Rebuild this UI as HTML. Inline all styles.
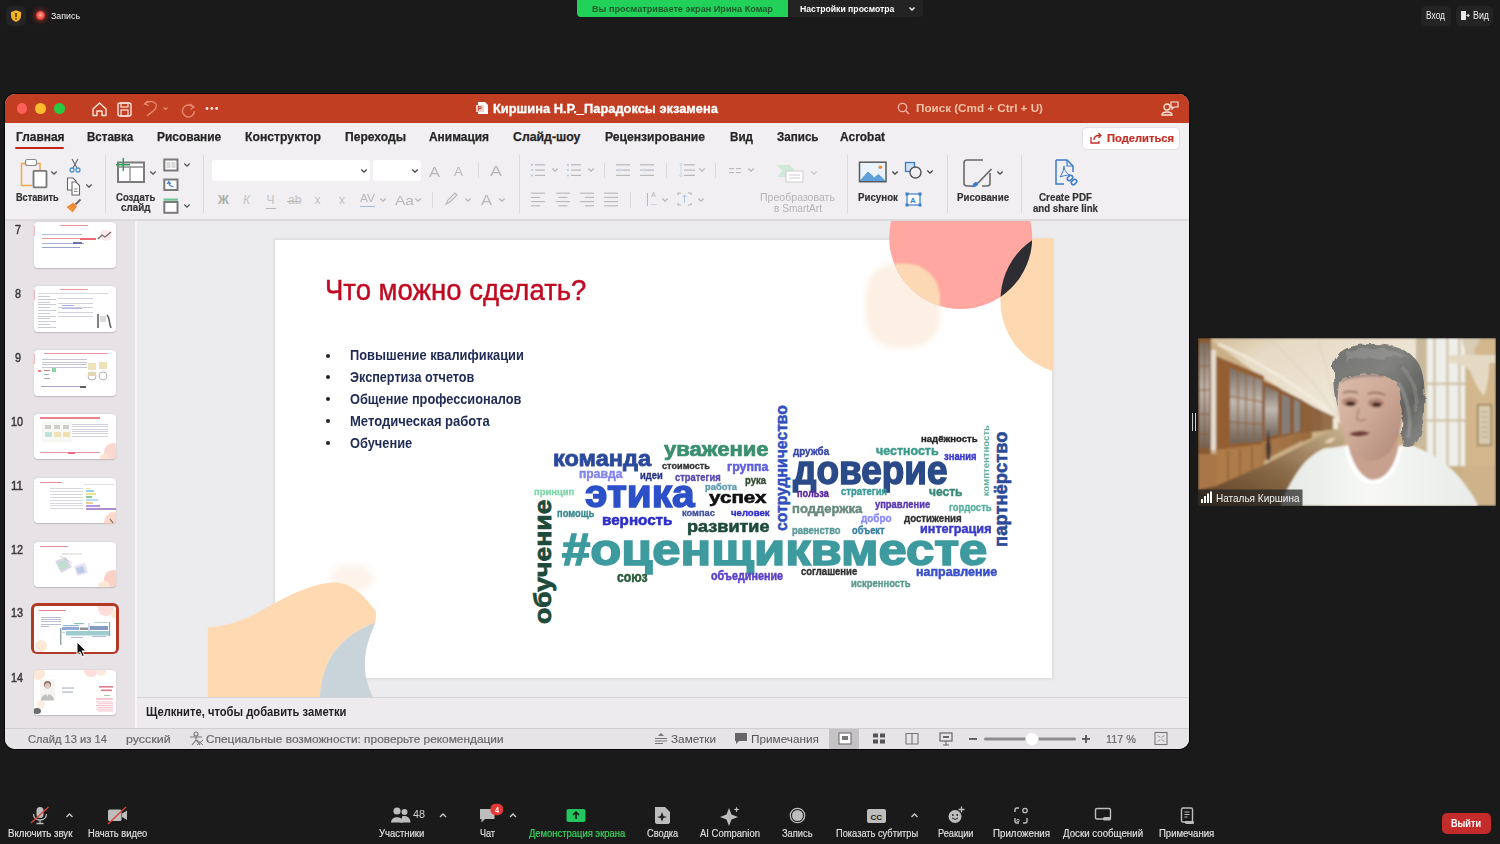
<!DOCTYPE html><html><head><meta charset="utf-8"><style>
html,body{margin:0;padding:0;width:1500px;height:844px;overflow:hidden;background:#1a1a1a;}
body{position:relative;font-family:"Liberation Sans",sans-serif;}
.t{position:absolute;white-space:nowrap;line-height:1;transform-origin:0 0;}
.r{position:absolute;}
</style></head><body>
<div class="r" style="left:6px;top:6px;width:20px;height:20px;background:#252525;border-radius:5px;"></div>
<svg class="r" style="left:9px;top:9px" width="14" height="14" viewBox="0 0 14 14"><path d="M7 1.2 L12 3 V7 C12 10 9.8 12 7 13 C4.2 12 2 10 2 7 V3 Z" fill="#f5b324"/><rect x="6.3" y="4" width="1.4" height="4.2" fill="#3a2a00"/><rect x="6.3" y="9.2" width="1.4" height="1.4" fill="#3a2a00"/></svg>
<div class="r" style="left:36px;top:11px;width:9px;height:9px;border-radius:50%;background:radial-gradient(circle at 50% 45%,#ffb0a8 0,#f0483c 55%,#d02a20 100%);box-shadow:0 0 4px 2px rgba(240,60,50,.45)"></div>
<div class="t" style="left:51.0px;top:11.0px;font-size:9.50px;font-weight:400;color:#f0f0f0;transform:scaleX(0.931);">Запись</div>
<div class="r" style="left:577px;top:0px;width:211px;height:17px;background:#22d15a;border-radius:0 0 0 4px;"></div>
<div class="r" style="left:788px;top:0px;width:135px;height:17px;background:#232323;border-radius:0 0 4px 0;"></div>
<div class="t" style="left:592.0px;top:4.1px;font-size:9.60px;font-weight:700;color:#1e5a2c;transform:scaleX(0.951);">Вы просматриваете экран Ирина Комар</div>
<div class="t" style="left:800.0px;top:4.1px;font-size:9.60px;font-weight:700;color:#ffffff;transform:scaleX(0.903);">Настройки просмотра</div>
<svg class="r" style="left:908px;top:6px" width="8" height="6" viewBox="0 0 8 6"><path d="M1.5 1.5 L4 4 L6.5 1.5" stroke="#fff" stroke-width="1.4" fill="none"/></svg>
<div class="r" style="left:1421px;top:6px;width:30px;height:20px;background:#242424;border-radius:5px;"></div>
<div class="t" style="left:1426.0px;top:10.5px;font-size:10.00px;font-weight:400;color:#eeeeee;transform:scaleX(0.841);">Вход</div>
<div class="r" style="left:1456px;top:6px;width:37px;height:20px;background:#242424;border-radius:5px;"></div>
<svg class="r" style="left:1460px;top:10px" width="10" height="11" viewBox="0 0 10 11"><rect x="1" y="1" width="5" height="9" fill="#e8e8e8"/><path d="M6.5 5.5 L9 5.5 M7.8 4.2 L9 5.5 L7.8 6.8" stroke="#e8e8e8" stroke-width="1.2" fill="none"/></svg>
<div class="t" style="left:1473.0px;top:10.5px;font-size:10.00px;font-weight:400;color:#eeeeee;transform:scaleX(0.884);">Вид</div>
<div class="r" style="left:5px;top:94px;width:1184px;height:655px;border-radius:10px;overflow:hidden;background:#eceaec;box-shadow:0 0 0 1px #050505;">
<div class="r" style="left:-5px;top:-94px;width:1500px;height:844px;">
<div class="r" style="left:5px;top:94px;width:1184px;height:29px;background:#c13e22;"></div>
<div class="r" style="left:16.9px;top:103.2px;width:10.6px;height:10.6px;border-radius:50%;background:#fd5f58"></div>
<div class="r" style="left:35.3px;top:103.2px;width:10.6px;height:10.6px;border-radius:50%;background:#fdbc2e"></div>
<div class="r" style="left:54.0px;top:103.2px;width:10.6px;height:10.6px;border-radius:50%;background:#28c840"></div>
<svg class="r" style="left:90px;top:100px" width="130" height="18" viewBox="0 0 130 18">
<path d="M3 9 L9.5 3 L16 9 V15.5 H12 V11 H7 V15.5 H3 Z" fill="none" stroke="#fbe6dc" stroke-width="1.4" stroke-linejoin="round"/>
<rect x="28" y="3" width="13" height="13" rx="2" fill="none" stroke="#fbe6dc" stroke-width="1.4"/><rect x="31" y="3" width="7" height="4" fill="none" stroke="#fbe6dc" stroke-width="1.2"/><rect x="31" y="10" width="7" height="6" fill="none" stroke="#fbe6dc" stroke-width="1.2"/>
<path d="M54.5 4 C60 -0.5 68 1.5 66 7.5 C65 10.5 60 13 57 16" fill="none" stroke="#e58a70" stroke-width="1.3"/><path d="M58 0.8 L54.5 4 L59 5.5" fill="none" stroke="#e58a70" stroke-width="1.3"/>
<path d="M73.5 7.5 L75.5 9.5 L77.5 7.5" fill="none" stroke="#e58a70" stroke-width="1.2"/>
<path d="M103 7 A6 6 0 1 0 104.5 11" fill="none" stroke="#e58a70" stroke-width="1.4"/><path d="M100 4 L104 7 L100.5 9.5" fill="none" stroke="#e58a70" stroke-width="1.3"/>
<circle cx="117" cy="8.5" r="1.4" fill="#fbe6dc"/><circle cx="121.8" cy="8.5" r="1.4" fill="#fbe6dc"/><circle cx="126.6" cy="8.5" r="1.4" fill="#fbe6dc"/>
</svg>
<svg class="r" style="left:476px;top:101px" width="13" height="14" viewBox="0 0 13 14"><path d="M2 1 H9 L12 4 V13 H2 Z" fill="#fff"/><rect x="0" y="4" width="8" height="7" fill="#f6d0c4"/><text x="1.5" y="10" font-size="6.5" font-weight="700" fill="#c3401f" font-family="Liberation Sans">P</text></svg>
<div class="t" style="left:493.0px;top:103.2px;font-size:12.50px;font-weight:700;color:#ffffff;transform:scaleX(1.029);-webkit-text-stroke:0.3px #fff;">Киршина Н.Р._Парадоксы экзамена</div>
<svg class="r" style="left:897px;top:102px" width="13" height="13" viewBox="0 0 13 13"><circle cx="5.5" cy="5.5" r="4.2" fill="none" stroke="#f2b6a4" stroke-width="1.3"/><path d="M8.6 8.6 L12 12" stroke="#f2b6a4" stroke-width="1.4"/></svg>
<div class="t" style="left:916.0px;top:103.2px;font-size:11.30px;font-weight:700;color:#f2c2a6;transform:scaleX(1.032);">Поиск (Cmd + Ctrl + U)</div>
<svg class="r" style="left:1161px;top:100px" width="18" height="16" viewBox="0 0 18 16"><circle cx="6" cy="7" r="3" fill="none" stroke="#fbe6dc" stroke-width="1.3"/><path d="M1 15 C1 11 11 11 11 15 Z" fill="none" stroke="#fbe6dc" stroke-width="1.3"/><path d="M10 2 H17 V7 H13 L11 9 V7 H10 Z" fill="none" stroke="#fbe6dc" stroke-width="1.2"/></svg>
<div class="r" style="left:5px;top:123px;width:1184px;height:97px;background:#f1eff1;"></div>
<div class="r" style="left:5px;top:219px;width:1184px;height:1.5px;background:#dcdadc;"></div>
<div class="t" style="left:15.5px;top:130.6px;font-size:12.30px;font-weight:700;color:#262626;transform:scaleX(0.970);-webkit-text-stroke:0.25px #262626;">Главная</div>
<div class="t" style="left:86.7px;top:130.6px;font-size:12.30px;font-weight:700;color:#262626;transform:scaleX(0.940);-webkit-text-stroke:0.25px #262626;">Вставка</div>
<div class="t" style="left:156.8px;top:130.6px;font-size:12.30px;font-weight:700;color:#262626;transform:scaleX(0.970);-webkit-text-stroke:0.25px #262626;">Рисование</div>
<div class="t" style="left:245.0px;top:130.6px;font-size:12.30px;font-weight:700;color:#262626;transform:scaleX(0.993);-webkit-text-stroke:0.25px #262626;">Конструктор</div>
<div class="t" style="left:345.0px;top:130.6px;font-size:12.30px;font-weight:700;color:#262626;transform:scaleX(0.983);-webkit-text-stroke:0.25px #262626;">Переходы</div>
<div class="t" style="left:429.0px;top:130.6px;font-size:12.30px;font-weight:700;color:#262626;transform:scaleX(0.969);-webkit-text-stroke:0.25px #262626;">Анимация</div>
<div class="t" style="left:513.0px;top:130.6px;font-size:12.30px;font-weight:700;color:#262626;-webkit-text-stroke:0.25px #262626;">Слайд-шоу</div>
<div class="t" style="left:605.0px;top:130.6px;font-size:12.30px;font-weight:700;color:#262626;transform:scaleX(0.987);-webkit-text-stroke:0.25px #262626;">Рецензирование</div>
<div class="t" style="left:730.0px;top:130.6px;font-size:12.30px;font-weight:700;color:#262626;transform:scaleX(0.949);-webkit-text-stroke:0.25px #262626;">Вид</div>
<div class="t" style="left:776.5px;top:130.6px;font-size:12.30px;font-weight:700;color:#262626;transform:scaleX(0.945);-webkit-text-stroke:0.25px #262626;">Запись</div>
<div class="t" style="left:840.0px;top:130.6px;font-size:12.30px;font-weight:700;color:#262626;transform:scaleX(0.968);-webkit-text-stroke:0.25px #262626;">Acrobat</div>
<div class="r" style="left:15px;top:146.8px;width:49px;height:2.6px;background:#c4281c;border-radius:1.3px;"></div>
<div class="r" style="left:1083px;top:128px;width:96px;height:21px;background:#ffffff;border-radius:4px;box-shadow:0 0 0 0.8px #dedcde;"></div>
<svg class="r" style="left:1089px;top:131px" width="14" height="14" viewBox="0 0 14 14"><path d="M2 6 V12 H10 V10" fill="none" stroke="#c42f26" stroke-width="1.3"/><path d="M5 9 C5 6 7 4.5 10 4.5 H12 M9.5 2 L12 4.5 L9.5 7" fill="none" stroke="#c42f26" stroke-width="1.3"/></svg>
<div class="t" style="left:1107.0px;top:133.2px;font-size:11.40px;font-weight:700;color:#c42f26;transform:scaleX(0.980);-webkit-text-stroke:0.2px #c42f26;">Поделиться</div>
<svg class="r" style="left:19px;top:157px" width="30" height="32" viewBox="0 0 30 32">
<path d="M6 6.5 H2.5 V28.5 H13 M17 6.5 H21 V13" fill="none" stroke="#f0a848" stroke-width="1.5"/>
<rect x="6.5" y="2.5" width="11" height="6" rx="2" fill="#fff" stroke="#8a8a8a" stroke-width="1.1"/>
<rect x="14.5" y="13.8" width="13" height="16.5" rx="0.8" fill="#fff" stroke="#777" stroke-width="1.8"/>
</svg>
<svg class="r" style="left:50px;top:170px" width="8" height="6" viewBox="0 0 8 6"><path d="M1.3 1.5 L4 4.2 L6.7 1.5" stroke="#555" stroke-width="1.3" fill="none"/></svg>
<div class="t" style="left:16.0px;top:191.7px;font-size:11.00px;font-weight:700;color:#333;transform:scaleX(0.833);-webkit-text-stroke:0.2px #333;">Вставить</div>
<svg class="r" style="left:66px;top:157px" width="18" height="58" viewBox="0 0 18 58">
<path d="M6 2 L11 11 M12 2 L7 11" stroke="#666" stroke-width="1.1"/><circle cx="6" cy="13" r="2" fill="none" stroke="#4a90d8" stroke-width="1.3"/><circle cx="12" cy="13" r="2" fill="none" stroke="#4a90d8" stroke-width="1.3"/>
<path d="M1.5 21 H7 L10 24 V33 H1.5 Z" fill="#fff" stroke="#666" stroke-width="1.1"/><path d="M6 25 H10 L13.5 28.5 V38 H6 Z" fill="#fff" stroke="#666" stroke-width="1.1"/><path d="M8 32 H11.5 M8 34.5 H11.5" stroke="#666" stroke-width=".8"/>
<path d="M14.5 42.5 L9.5 47.5" stroke="#666" stroke-width="1.8"/><path d="M0.5 50 L7.5 45.5 L11 49.5 L6.5 55.5 Z" fill="#f08a30"/><path d="M2.5 52 L5 49.5 M4.5 54 L7.5 50.5" stroke="#f8c080" stroke-width=".7"/>
</svg>
<svg class="r" style="left:85.3px;top:182.5px" width="8" height="6" viewBox="0 0 8 6"><path d="M1.3 1.5 L4 4.2 L6.7 1.5" stroke="#555" stroke-width="1.3" fill="none"/></svg>
<div class="r" style="left:105px;top:155px;width:1px;height:58px;background:#dcdadc;"></div>
<svg class="r" style="left:114px;top:156px" width="34" height="30" viewBox="0 0 34 30">
<rect x="4" y="6.5" width="26" height="19.5" fill="#fff" stroke="#7a7a7a" stroke-width="2"/><path d="M16 11 V26 M4 11 H30" stroke="#8a8a8a" stroke-width="1.3"/>
<path d="M9.3 2 V15 M2 8.7 H16" stroke="#2ea05a" stroke-width="1.5"/>
</svg>
<svg class="r" style="left:149.3px;top:170px" width="8" height="6" viewBox="0 0 8 6"><path d="M1.3 1.5 L4 4.2 L6.7 1.5" stroke="#555" stroke-width="1.3" fill="none"/></svg>
<div class="t" style="left:116.0px;top:191.7px;font-size:11.00px;font-weight:700;color:#333;transform:scaleX(0.869);-webkit-text-stroke:0.2px #333;">Создать</div>
<div class="t" style="left:121.3px;top:201.7px;font-size:11.00px;font-weight:700;color:#333;transform:scaleX(0.892);-webkit-text-stroke:0.2px #333;">слайд</div>
<svg class="r" style="left:162px;top:157px" width="18" height="58" viewBox="0 0 18 58">
<rect x="2.3" y="2.5" width="13.2" height="11" fill="#fff" stroke="#7a7a7a" stroke-width="2"/><rect x="4.5" y="5" width="4" height="6" fill="#d8d8d8"/><rect x="9.5" y="5" width="4" height="6" fill="#d8d8d8"/>
<rect x="2.3" y="22.5" width="13.2" height="10.5" fill="#fff" stroke="#7a7a7a" stroke-width="2"/><path d="M5 27 L6.8 24.5 L8.6 27 M6.8 25 C6.8 29 9 29.5 11.5 29.5" stroke="#3a7fd0" stroke-width="1.2" fill="none"/>
<rect x="1.5" y="41.5" width="14.5" height="2.2" fill="#6cc494"/><rect x="2.3" y="45" width="13.2" height="10.8" fill="#fff" stroke="#7a7a7a" stroke-width="2"/>
</svg>
<svg class="r" style="left:182.7px;top:162px" width="8" height="6" viewBox="0 0 8 6"><path d="M1.3 1.5 L4 4.2 L6.7 1.5" stroke="#555" stroke-width="1.3" fill="none"/></svg>
<svg class="r" style="left:182.7px;top:203px" width="8" height="6" viewBox="0 0 8 6"><path d="M1.3 1.5 L4 4.2 L6.7 1.5" stroke="#555" stroke-width="1.3" fill="none"/></svg>
<div class="r" style="left:203px;top:155px;width:1px;height:58px;background:#dcdadc;"></div>
<div class="r" style="left:212.4px;top:160.2px;width:157.2px;height:20.8px;background:#ffffff;border-radius:3px;"></div>
<svg class="r" style="left:359.8px;top:168px" width="8" height="6" viewBox="0 0 8 6"><path d="M1.3 1.5 L4 4.2 L6.7 1.5" stroke="#444" stroke-width="1.3" fill="none"/></svg>
<div class="r" style="left:373.2px;top:160.2px;width:48px;height:20.8px;background:#ffffff;border-radius:3px;"></div>
<svg class="r" style="left:411px;top:168px" width="8" height="6" viewBox="0 0 8 6"><path d="M1.3 1.5 L4 4.2 L6.7 1.5" stroke="#444" stroke-width="1.3" fill="none"/></svg>
<div class="t" style="left:429.0px;top:164.3px;font-size:15.00px;font-weight:400;color:#b9b7b9;transform:scaleX(1.095);">A</div>
<div class="t" style="left:454.0px;top:166.4px;font-size:12.50px;font-weight:400;color:#b9b7b9;transform:scaleX(1.075);">A</div>
<div class="r" style="left:478.4px;top:163px;width:1px;height:15px;background:#dcdadc;"></div>
<div class="t" style="left:490.0px;top:164.1px;font-size:14.00px;font-weight:400;color:#b9b7b9;transform:scaleX(1.279);">A</div>
<div class="t" style="left:218.1px;top:194.3px;font-size:12.00px;font-weight:700;color:#aaa;">Ж</div>
<div class="t" style="left:243.0px;top:194.3px;font-size:12.00px;font-weight:400;color:#c4c2c4;font-style:italic;">К</div>
<div class="t" style="left:266.5px;top:194.3px;font-size:12.00px;font-weight:400;color:#c4c2c4;">Ч</div>
<div class="t" style="left:288.0px;top:194.3px;font-size:12.00px;font-weight:400;color:#c4c2c4;">ab</div>
<div class="t" style="left:314.5px;top:194.3px;font-size:12.00px;font-weight:400;color:#c4c2c4;">x</div>
<div class="t" style="left:339.0px;top:194.3px;font-size:12.00px;font-weight:400;color:#c4c2c4;">x</div>
<div class="r" style="left:266px;top:207.5px;width:10px;height:1px;background:#b9b7b9;"></div>
<div class="r" style="left:287px;top:201px;width:14px;height:1px;background:#b9b7b9;"></div>
<div class="t" style="left:360.0px;top:193.5px;font-size:10.00px;font-weight:400;color:#b9b7b9;transform:scaleX(1.190);">AV</div>
<div class="r" style="left:360px;top:206px;width:15px;height:1px;background:#9cc0e0;"></div>
<svg class="r" style="left:379px;top:197px" width="8" height="6" viewBox="0 0 8 6"><path d="M1.3 1.5 L4 4.2 L6.7 1.5" stroke="#b9b7b9" stroke-width="1.3" fill="none"/></svg>
<div class="t" style="left:395.0px;top:194.0px;font-size:13.00px;font-weight:400;color:#b9b7b9;transform:scaleX(1.193);">Aa</div>
<svg class="r" style="left:414px;top:197px" width="8" height="6" viewBox="0 0 8 6"><path d="M1.3 1.5 L4 4.2 L6.7 1.5" stroke="#b9b7b9" stroke-width="1.3" fill="none"/></svg>
<div class="r" style="left:432px;top:192px;width:1px;height:16px;background:#dcdadc;"></div>
<svg class="r" style="left:443px;top:191px" width="16" height="16" viewBox="0 0 16 16"><path d="M3 13 L5 9 L12 2 L14 4 L7 11 Z" fill="none" stroke="#b9b7b9" stroke-width="1.2"/></svg>
<svg class="r" style="left:464px;top:197px" width="8" height="6" viewBox="0 0 8 6"><path d="M1.3 1.5 L4 4.2 L6.7 1.5" stroke="#b9b7b9" stroke-width="1.3" fill="none"/></svg>
<div class="t" style="left:481.0px;top:193.1px;font-size:14.00px;font-weight:400;color:#b9b7b9;transform:scaleX(1.173);">A</div>
<svg class="r" style="left:498px;top:197px" width="8" height="6" viewBox="0 0 8 6"><path d="M1.3 1.5 L4 4.2 L6.7 1.5" stroke="#b9b7b9" stroke-width="1.3" fill="none"/></svg>
<div class="r" style="left:518.7px;top:155px;width:1px;height:58px;background:#dcdadc;"></div>
<svg class="r" style="left:0;top:0" width="1200" height="230"><circle cx="532" cy="164.8" r="1" fill="#a8c8e8"/><rect x="535" y="164.20000000000002" width="10" height="1.2" fill="#b9b7b9"/><circle cx="532" cy="170.10000000000002" r="1" fill="#a8c8e8"/><rect x="535" y="169.50000000000003" width="10" height="1.2" fill="#b9b7b9"/><circle cx="532" cy="175.4" r="1" fill="#a8c8e8"/><rect x="535" y="174.8" width="10" height="1.2" fill="#b9b7b9"/><circle cx="568" cy="164.8" r="1" fill="#a8c8e8"/><rect x="571" y="164.20000000000002" width="10" height="1.2" fill="#b9b7b9"/><circle cx="568" cy="170.10000000000002" r="1" fill="#a8c8e8"/><rect x="571" y="169.50000000000003" width="10" height="1.2" fill="#b9b7b9"/><circle cx="568" cy="175.4" r="1" fill="#a8c8e8"/><rect x="571" y="174.8" width="10" height="1.2" fill="#b9b7b9"/><rect x="616" y="164.20000000000002" width="14" height="1.2" fill="#b9b7b9"/><rect x="616" y="169.50000000000003" width="14" height="1.2" fill="#b9b7b9"/><rect x="616" y="174.8" width="14" height="1.2" fill="#b9b7b9"/><rect x="640" y="164.20000000000002" width="14" height="1.2" fill="#b9b7b9"/><rect x="640" y="169.50000000000003" width="14" height="1.2" fill="#b9b7b9"/><rect x="640" y="174.8" width="14" height="1.2" fill="#b9b7b9"/><rect x="684" y="164.20000000000002" width="11" height="1.2" fill="#b9b7b9"/><rect x="684" y="169.50000000000003" width="11" height="1.2" fill="#b9b7b9"/><rect x="684" y="174.8" width="11" height="1.2" fill="#b9b7b9"/><path d="M618.5 170.4 H623 M620 168.5 L618 170.4 L620 172.3" stroke="#c8d8e8" stroke-width="1" fill="none"/><path d="M641 170.4 H646 M644 168.5 L646 170.4 L644 172.3" stroke="#c8d8e8" stroke-width="1" fill="none"/><path d="M681 163 V177 M679.3 165 L681 163 L682.7 165 M679.3 175 L681 177 L682.7 175" stroke="#c8d8e8" stroke-width="1" fill="none"/><rect x="729" y="168" width="5" height="1.1" fill="#b9b7b9"/><rect x="736" y="168" width="5" height="1.1" fill="#b9b7b9"/><rect x="729" y="172" width="5" height="1.1" fill="#b9b7b9"/><rect x="736" y="172" width="5" height="1.1" fill="#b9b7b9"/><rect x="531" y="192.64999999999998" width="14" height="1.1" fill="#b9b7b9"/><rect x="531" y="196.84999999999997" width="9" height="1.1" fill="#b9b7b9"/><rect x="531" y="201.04999999999998" width="14" height="1.1" fill="#b9b7b9"/><rect x="531" y="205.24999999999997" width="9" height="1.1" fill="#b9b7b9"/><rect x="556.0" y="192.64999999999998" width="14" height="1.1" fill="#b9b7b9"/><rect x="558.5" y="196.84999999999997" width="9" height="1.1" fill="#b9b7b9"/><rect x="556.0" y="201.04999999999998" width="14" height="1.1" fill="#b9b7b9"/><rect x="558.5" y="205.24999999999997" width="9" height="1.1" fill="#b9b7b9"/><rect x="580" y="192.64999999999998" width="14" height="1.1" fill="#b9b7b9"/><rect x="585" y="196.84999999999997" width="9" height="1.1" fill="#b9b7b9"/><rect x="580" y="201.04999999999998" width="14" height="1.1" fill="#b9b7b9"/><rect x="585" y="205.24999999999997" width="9" height="1.1" fill="#b9b7b9"/><rect x="604" y="192.64999999999998" width="14" height="1.1" fill="#b9b7b9"/><rect x="604" y="196.84999999999997" width="14" height="1.1" fill="#b9b7b9"/><rect x="604" y="201.04999999999998" width="14" height="1.1" fill="#b9b7b9"/><rect x="604" y="205.24999999999997" width="14" height="1.1" fill="#b9b7b9"/></svg>
<svg class="r" style="left:551px;top:167px" width="8" height="6" viewBox="0 0 8 6"><path d="M1.3 1.5 L4 4.2 L6.7 1.5" stroke="#b9b7b9" stroke-width="1.3" fill="none"/></svg>
<svg class="r" style="left:587px;top:167px" width="8" height="6" viewBox="0 0 8 6"><path d="M1.3 1.5 L4 4.2 L6.7 1.5" stroke="#b9b7b9" stroke-width="1.3" fill="none"/></svg>
<svg class="r" style="left:698px;top:167px" width="8" height="6" viewBox="0 0 8 6"><path d="M1.3 1.5 L4 4.2 L6.7 1.5" stroke="#b9b7b9" stroke-width="1.3" fill="none"/></svg>
<svg class="r" style="left:747px;top:167px" width="8" height="6" viewBox="0 0 8 6"><path d="M1.3 1.5 L4 4.2 L6.7 1.5" stroke="#b9b7b9" stroke-width="1.3" fill="none"/></svg>
<svg class="r" style="left:661px;top:196.5px" width="8" height="6" viewBox="0 0 8 6"><path d="M1.3 1.5 L4 4.2 L6.7 1.5" stroke="#b9b7b9" stroke-width="1.3" fill="none"/></svg>
<svg class="r" style="left:697px;top:196.5px" width="8" height="6" viewBox="0 0 8 6"><path d="M1.3 1.5 L4 4.2 L6.7 1.5" stroke="#b9b7b9" stroke-width="1.3" fill="none"/></svg>
<div class="r" style="left:604px;top:163px;width:1px;height:15px;background:#dcdadc;"></div>
<div class="r" style="left:666px;top:163px;width:1px;height:15px;background:#dcdadc;"></div>
<div class="r" style="left:714.7px;top:163px;width:1px;height:15px;background:#dcdadc;"></div>
<div class="r" style="left:630px;top:192px;width:1px;height:16px;background:#dcdadc;"></div>
<div class="t" style="left:651.0px;top:191.1px;font-size:7.00px;font-weight:400;color:#b9b7b9;">A</div>
<div class="r" style="left:646.5px;top:193px;width:1px;height:13px;background:#b9b7b9;"></div>
<div class="r" style="left:651px;top:204px;width:6px;height:1px;background:#c8d8e8;"></div>
<svg class="r" style="left:677px;top:192px" width="15" height="14" viewBox="0 0 15 14"><path d="M1 3 V1 H4 M11 1 H14 V3 M1 11 V13 H4 M11 13 H14 V11" fill="none" stroke="#b9b7b9" stroke-width="1.2"/><path d="M7.5 3 V11 M5.5 5 L7.5 3 L9.5 5" fill="none" stroke="#a8c8e8" stroke-width="1"/></svg>
<svg class="r" style="left:776px;top:162px" width="30" height="22" viewBox="0 0 30 22"><path d="M1 3 H14 L19 9 L14 15 H1 L6 9 Z" fill="#cfe8d8"/><rect x="10" y="9" width="17" height="11" fill="#fff" stroke="#ccc" stroke-width="1"/><path d="M13 13 H24 M13 16 H24" stroke="#ccc" stroke-width="1"/></svg>
<svg class="r" style="left:809.6px;top:169.6px" width="8" height="6" viewBox="0 0 8 6"><path d="M1.3 1.5 L4 4.2 L6.7 1.5" stroke="#c8c8c8" stroke-width="1.3" fill="none"/></svg>
<div class="t" style="left:760.0px;top:192.5px;font-size:10.00px;font-weight:400;color:#b5b3b5;transform:scaleX(1.056);">Преобразовать</div>
<div class="t" style="left:774.0px;top:203.5px;font-size:10.00px;font-weight:400;color:#b5b3b5;transform:scaleX(1.009);">в SmartArt</div>
<div class="r" style="left:847px;top:155px;width:1px;height:58px;background:#dcdadc;"></div>
<svg class="r" style="left:858px;top:161px" width="30" height="22" viewBox="0 0 30 22"><rect x="1.5" y="1.2" width="26.5" height="19.5" fill="#eaf3fb" stroke="#5a5a5a" stroke-width="1.5"/><path d="M2.2 20 L10 11 L16 16.5 L20.5 13 L27.3 19.5 V20 Z" fill="#5f9fdc"/><path d="M2.2 20 L10 11 L15 15.5" fill="none" stroke="#4a86c6" stroke-width=".8"/><circle cx="22.3" cy="6.3" r="1.8" fill="#f08a30"/></svg>
<svg class="r" style="left:891px;top:169.6px" width="8" height="6" viewBox="0 0 8 6"><path d="M1.3 1.5 L4 4.2 L6.7 1.5" stroke="#444" stroke-width="1.3" fill="none"/></svg>
<svg class="r" style="left:904px;top:161px" width="20" height="20" viewBox="0 0 20 20"><rect x="1.5" y="1.5" width="9" height="9" fill="#cde0f5" stroke="#3d7cc9" stroke-width="1.3"/><circle cx="11.5" cy="11.5" r="5.5" fill="#f1eff1" stroke="#555" stroke-width="1.4"/></svg>
<svg class="r" style="left:926px;top:169px" width="8" height="6" viewBox="0 0 8 6"><path d="M1.3 1.5 L4 4.2 L6.7 1.5" stroke="#444" stroke-width="1.3" fill="none"/></svg>
<svg class="r" style="left:905px;top:192px" width="17" height="15" viewBox="0 0 17 15"><rect x="2" y="2" width="13" height="11" fill="#fff" stroke="#3d7cc9" stroke-width="1.2"/><rect x="0.5" y="0.5" width="3" height="3" fill="#3d7cc9"/><rect x="13.5" y="0.5" width="3" height="3" fill="#3d7cc9"/><rect x="0.5" y="11.5" width="3" height="3" fill="#3d7cc9"/><rect x="13.5" y="11.5" width="3" height="3" fill="#3d7cc9"/><text x="5" y="11" font-size="8" font-weight="700" fill="#3d7cc9" font-family="Liberation Sans">A</text></svg>
<div class="t" style="left:858.0px;top:191.7px;font-size:11.00px;font-weight:700;color:#333;transform:scaleX(0.884);-webkit-text-stroke:0.2px #333;">Рисунок</div>
<div class="r" style="left:946.6px;top:155px;width:1px;height:58px;background:#dcdadc;"></div>
<svg class="r" style="left:961px;top:157px" width="34" height="32" viewBox="0 0 34 32"><path d="M22 3 H6 C4 3 3 4 3 6 V26 C3 28 4 29 6 29 H11 M21 29 H26 C28 29 29 28 29 26 V16" fill="none" stroke="#6a6a6a" stroke-width="1.6"/><path d="M30.5 12 L17 26" stroke="#6a6a6a" stroke-width="1.8"/><path d="M12 27 C14 24 17 24.5 17.5 27 C16 30 12 30.5 10 30 C11 29.5 11.5 28.5 12 27 Z" fill="#3d7cc9"/></svg>
<svg class="r" style="left:996px;top:169.5px" width="8" height="6" viewBox="0 0 8 6"><path d="M1.3 1.5 L4 4.2 L6.7 1.5" stroke="#444" stroke-width="1.3" fill="none"/></svg>
<div class="t" style="left:957.0px;top:191.7px;font-size:11.00px;font-weight:700;color:#333;transform:scaleX(0.879);-webkit-text-stroke:0.2px #333;">Рисование</div>
<div class="r" style="left:1021px;top:155px;width:1px;height:58px;background:#dcdadc;"></div>
<svg class="r" style="left:1054px;top:158px" width="28" height="30" viewBox="0 0 28 30"><path d="M2 2 H13 L19 8 V14 M2 2 V26 H10" fill="none" stroke="#3d7cc9" stroke-width="1.5"/><path d="M13 2 V8 H19" fill="none" stroke="#3d7cc9" stroke-width="1.2"/><path d="M6 19 C9 15 10 10 10 8 C10 12 13 16 16 17 C12 17 9 18 6 19 Z" fill="none" stroke="#3d7cc9" stroke-width="1"/><rect x="13" y="18" width="6" height="4" rx="2" transform="rotate(-45 16 20)" fill="none" stroke="#3d7cc9" stroke-width="1.5"/><rect x="17" y="22" width="6" height="4" rx="2" transform="rotate(-45 20 24)" fill="none" stroke="#3d7cc9" stroke-width="1.5"/></svg>
<div class="t" style="left:1039.0px;top:192.1px;font-size:10.50px;font-weight:700;color:#333;transform:scaleX(0.936);-webkit-text-stroke:0.2px #333;">Create PDF</div>
<div class="t" style="left:1033.0px;top:203.1px;font-size:10.50px;font-weight:700;color:#333;transform:scaleX(0.920);-webkit-text-stroke:0.2px #333;">and share link</div>
<div class="r" style="left:5px;top:220.5px;width:130px;height:508px;background:#e6e2e6;"></div>
<div class="r" style="left:135px;top:220.5px;width:2px;height:508px;background:#f6f4f6;"></div>
<div class="r" style="left:137px;top:220.5px;width:1052px;height:477px;background:#ecebed;"></div>
<div class="r" style="left:275px;top:240px;width:777px;height:438px;background:#ffffff;box-shadow:0 0 3px 1px rgba(0,0,0,0.09);"></div>
<div class="r" style="left:275px;top:240px;width:777px;height:438px;background:#ffffff;"></div>
<div class="r" style="left:137px;top:696.5px;width:1052px;height:1px;background:#d6d4d6;"></div>
<div class="r" style="left:137px;top:697.5px;width:1052px;height:31px;background:#edebed;"></div>
<div class="t" style="left:145.5px;top:706.3px;font-size:12.00px;font-weight:700;color:#222;transform:scaleX(0.933);">Щелкните, чтобы добавить заметки</div>
<div class="r" style="left:5px;top:728px;width:1184px;height:1px;background:#d0ced0;"></div>
<div class="r" style="left:5px;top:729px;width:1184px;height:20px;background:#e6e4e6;"></div>
<div class="t" style="left:27.7px;top:734.1px;font-size:11.50px;font-weight:400;color:#6a686a;transform:scaleX(0.969);-webkit-text-stroke:0.2px #6a686a;">Слайд 13 из 14</div>
<div class="t" style="left:126.0px;top:734.1px;font-size:11.50px;font-weight:400;color:#6a686a;transform:scaleX(1.080);-webkit-text-stroke:0.2px #6a686a;">русский</div>
<svg class="r" style="left:188px;top:731px" width="16" height="15" viewBox="0 0 16 15"><circle cx="8" cy="3" r="2" fill="none" stroke="#777" stroke-width="1.1"/><path d="M2 6 H14 M8 6 V9 L4 14 M8 9 L12 14" fill="none" stroke="#777" stroke-width="1.1"/><path d="M9 9 L15 14 M15 9 L9 14" stroke="#777" stroke-width="1"/></svg>
<div class="t" style="left:205.5px;top:734.1px;font-size:11.50px;font-weight:400;color:#6a686a;transform:scaleX(1.032);-webkit-text-stroke:0.2px #6a686a;">Специальные возможности: проверьте рекомендации</div>
<svg class="r" style="left:654px;top:732px" width="14" height="12" viewBox="0 0 14 12"><path d="M7 1 L4 4 H10 Z" fill="#777"/><path d="M1 6.5 H13 M1 9 H13 M1 11.5 H9" stroke="#777" stroke-width="1.1"/></svg>
<div class="t" style="left:671.0px;top:734.1px;font-size:11.50px;font-weight:400;color:#555;transform:scaleX(1.023);">Заметки</div>
<svg class="r" style="left:734px;top:732px" width="14" height="13" viewBox="0 0 14 13"><path d="M1 1 H13 V9 H5 L2 12 V9 H1 Z" fill="#666"/></svg>
<div class="t" style="left:751.0px;top:734.1px;font-size:11.50px;font-weight:400;color:#555;transform:scaleX(1.024);">Примечания</div>
<div class="r" style="left:829px;top:729px;width:30px;height:20px;background:#c4c2c4;"></div>
<svg class="r" style="left:0;top:0" width="1200" height="760">
<rect x="839" y="733" width="12" height="11" fill="#fff" stroke="#777" stroke-width="1.2"/><rect x="842" y="736" width="6" height="4" fill="#777"/>
<rect x="873" y="733.5" width="5" height="4" fill="#555"/><rect x="880" y="733.5" width="5" height="4" fill="#555"/><rect x="873" y="739.5" width="5" height="4" fill="#555"/><rect x="880" y="739.5" width="5" height="4" fill="#555"/>
<path d="M906 733.5 H912 V744 H906 Z M912 733.5 H918 V744 H912 Z" fill="none" stroke="#777" stroke-width="1.1"/>
<rect x="940" y="733" width="12" height="8" fill="none" stroke="#666" stroke-width="1.2"/><path d="M946 741 V745 M943 745 H949" stroke="#666" stroke-width="1.1"/><rect x="943" y="736" width="6" height="2" fill="#666"/>
<rect x="969" y="738" width="8" height="1.8" fill="#555"/>
<rect x="984" y="737.5" width="92" height="3" rx="1.5" fill="#8e8c8e"/>
<circle cx="1032" cy="739" r="6.5" fill="#fff" stroke="#e0e0e0" stroke-width=".5"/>
<rect x="1082" y="738" width="8" height="1.8" fill="#555"/><rect x="1085.1" y="735" width="1.8" height="8" fill="#555"/>
<rect x="1155" y="732.5" width="12" height="12" fill="none" stroke="#777" stroke-width="1.1"/><path d="M1158 735.5 L1160 737.5 M1164 735.5 L1162 737.5 M1158 741.5 L1160 739.5 M1164 741.5 L1162 739.5" stroke="#777" stroke-width="1"/>
</svg>
<div class="t" style="left:1106.0px;top:734.1px;font-size:11.50px;font-weight:400;color:#6a686a;transform:scaleX(0.945);-webkit-text-stroke:0.2px #6a686a;">117 %</div>
<div class="t" style="left:14.5px;top:224.1px;font-size:12.00px;font-weight:400;color:#3a3a3a;transform:scaleX(0.901);-webkit-text-stroke:0.45px #3a3a3a;">7</div>
<div class="r" style="left:34.2px;top:222.3px;width:82px;height:45.5px;background:#ffffff;border-radius:4px;box-shadow:0 0.5px 1.5px rgba(0,0,0,.18);"></div>
<div class="r" style="left:34.2px;top:226.3px;width:1.2px;height:10px;background:#f2b8c0;"></div>
<div class="t" style="left:14.5px;top:287.8px;font-size:12.00px;font-weight:400;color:#3a3a3a;transform:scaleX(0.901);-webkit-text-stroke:0.45px #3a3a3a;">8</div>
<div class="r" style="left:34.2px;top:286px;width:82px;height:45.5px;background:#ffffff;border-radius:4px;box-shadow:0 0.5px 1.5px rgba(0,0,0,.18);"></div>
<div class="r" style="left:34.2px;top:290px;width:1.2px;height:10px;background:#f2b8c0;"></div>
<div class="t" style="left:14.5px;top:351.8px;font-size:12.00px;font-weight:400;color:#3a3a3a;transform:scaleX(0.901);-webkit-text-stroke:0.45px #3a3a3a;">9</div>
<div class="r" style="left:34.2px;top:350px;width:82px;height:45.5px;background:#ffffff;border-radius:4px;box-shadow:0 0.5px 1.5px rgba(0,0,0,.18);"></div>
<div class="r" style="left:34.2px;top:354px;width:1.2px;height:10px;background:#f2b8c0;"></div>
<div class="t" style="left:11.0px;top:415.6px;font-size:12.00px;font-weight:400;color:#3a3a3a;transform:scaleX(0.901);-webkit-text-stroke:0.45px #3a3a3a;">10</div>
<div class="r" style="left:34.2px;top:413.8px;width:82px;height:45.5px;background:#ffffff;border-radius:4px;box-shadow:0 0.5px 1.5px rgba(0,0,0,.18);"></div>
<div class="t" style="left:11.0px;top:479.6px;font-size:12.00px;font-weight:400;color:#3a3a3a;transform:scaleX(0.962);-webkit-text-stroke:0.45px #3a3a3a;">11</div>
<div class="r" style="left:34.2px;top:477.8px;width:82px;height:45.5px;background:#ffffff;border-radius:4px;box-shadow:0 0.5px 1.5px rgba(0,0,0,.18);"></div>
<div class="t" style="left:11.0px;top:543.5px;font-size:12.00px;font-weight:400;color:#3a3a3a;transform:scaleX(0.901);-webkit-text-stroke:0.45px #3a3a3a;">12</div>
<div class="r" style="left:34.2px;top:541.7px;width:82px;height:45.5px;background:#ffffff;border-radius:4px;box-shadow:0 0.5px 1.5px rgba(0,0,0,.18);"></div>
<div class="t" style="left:11.0px;top:607.3px;font-size:12.00px;font-weight:400;color:#3a3a3a;transform:scaleX(0.901);-webkit-text-stroke:0.45px #3a3a3a;">13</div>
<div class="r" style="left:31.3px;top:603px;width:87.7px;height:51.4px;background:#b23a25;border-radius:6px;"></div>
<div class="r" style="left:34.2px;top:605.5px;width:82px;height:46px;background:#ffffff;border-radius:3px;"></div>
<div class="t" style="left:11.0px;top:671.5px;font-size:12.00px;font-weight:400;color:#3a3a3a;transform:scaleX(0.901);-webkit-text-stroke:0.45px #3a3a3a;">14</div>
<div class="r" style="left:34.2px;top:669.7px;width:82px;height:45.5px;background:#ffffff;border-radius:4px;box-shadow:0 0.5px 1.5px rgba(0,0,0,.18);"></div>
<div class="r" style="left:0;top:0;width:140px;height:740px;filter:blur(0.3px);opacity:.72">
<div class="r" style="left:60px;top:225px;width:28px;height:1px;background:#e8707a;"></div>
<div class="r" style="left:42px;top:234.0px;width:40px;height:1.1px;background:#9aa0c8;"></div>
<div class="r" style="left:42px;top:238.3px;width:45px;height:1.1px;background:#e07070;"></div>
<div class="r" style="left:42px;top:242.6px;width:42px;height:1.1px;background:#8890c0;"></div>
<div class="r" style="left:42px;top:246.9px;width:38px;height:1.1px;background:#7080b0;"></div>
<div class="r" style="left:80px;top:238px;width:16px;height:1.6px;background:#e23040;"></div>
<div class="r" style="left:73px;top:242px;width:9px;height:1.5px;background:#3040a0;"></div>
<svg class="r" style="left:96px;top:230px" width="18" height="12" viewBox="0 0 18 12"><circle cx="10" cy="5" r="6" fill="#fbe0e0"/><path d="M2 9 L6 5 L9 7 L15 2" stroke="#333" stroke-width="1.2" fill="none"/></svg>
<div class="r" style="left:60px;top:289px;width:28px;height:1px;background:#e8707a;"></div>
<div class="r" style="left:38px;top:293px;width:70px;height:0.6px;background:#ccc;"></div>
<div class="r" style="left:38px;top:296.0px;width:12px;height:0.8px;background:#b8b8c8;"></div>
<div class="r" style="left:38px;top:298.8px;width:18px;height:0.8px;background:#b8b8c8;"></div>
<div class="r" style="left:38px;top:301.6px;width:12px;height:0.8px;background:#b8b8c8;"></div>
<div class="r" style="left:38px;top:304.4px;width:18px;height:0.8px;background:#b8b8c8;"></div>
<div class="r" style="left:38px;top:307.2px;width:12px;height:0.8px;background:#b8b8c8;"></div>
<div class="r" style="left:38px;top:310.0px;width:18px;height:0.8px;background:#b8b8c8;"></div>
<div class="r" style="left:38px;top:312.8px;width:12px;height:0.8px;background:#b8b8c8;"></div>
<div class="r" style="left:38px;top:315.6px;width:18px;height:0.8px;background:#b8b8c8;"></div>
<div class="r" style="left:38px;top:318.4px;width:12px;height:0.8px;background:#b8b8c8;"></div>
<div class="r" style="left:38px;top:321.2px;width:18px;height:0.8px;background:#b8b8c8;"></div>
<div class="r" style="left:38px;top:324.0px;width:12px;height:0.8px;background:#b8b8c8;"></div>
<div class="r" style="left:38px;top:326.8px;width:18px;height:0.8px;background:#b8b8c8;"></div>
<div class="r" style="left:58px;top:298.0px;width:35px;height:0.8px;background:#c0c0d0;"></div>
<div class="r" style="left:58px;top:302.5px;width:35px;height:0.8px;background:#c0c0d0;"></div>
<div class="r" style="left:58px;top:307.0px;width:35px;height:0.8px;background:#c0c0d0;"></div>
<div class="r" style="left:58px;top:311.5px;width:35px;height:0.8px;background:#c0c0d0;"></div>
<div class="r" style="left:58px;top:316.0px;width:35px;height:0.8px;background:#c0c0d0;"></div>
<div class="r" style="left:62px;top:305px;width:12px;height:1px;background:#8090e0;"></div>
<div class="r" style="left:62px;top:308px;width:20px;height:0.8px;background:#90a0e0;"></div>
<svg class="r" style="left:95px;top:312px" width="18" height="18" viewBox="0 0 18 18"><path d="M3 2 V16 M12 3 C15 6 14 12 16 16" stroke="#222" stroke-width="1.6" fill="none"/><rect x="5" y="4" width="6" height="6" fill="#ccc"/></svg>
<div class="r" style="left:44px;top:353px;width:64px;height:1.4px;background:#e8707a;"></div>
<div class="r" style="left:42px;top:359.0px;width:45px;height:0.8px;background:#b0b0c8;"></div>
<div class="r" style="left:42px;top:361.5px;width:45px;height:0.8px;background:#b0b0c8;"></div>
<div class="r" style="left:42px;top:364.0px;width:45px;height:0.8px;background:#b0b0c8;"></div>
<div class="r" style="left:42px;top:366.5px;width:45px;height:0.8px;background:#b0b0c8;"></div>
<div class="r" style="left:38px;top:370px;width:3px;height:2px;background:#e05050;"></div>
<div class="r" style="left:44px;top:370px;width:6px;height:1px;background:#c05050;"></div>
<div class="r" style="left:52px;top:368px;width:4px;height:4px;background:#5ac88a;"></div>
<div class="r" style="left:44px;top:374px;width:5px;height:1px;background:#888;"></div>
<div class="r" style="left:44px;top:378px;width:6px;height:1px;background:#888;"></div>
<div class="r" style="left:41px;top:386px;width:45px;height:0.8px;background:#8080b0;"></div>
<div class="r" style="left:80px;top:386px;width:6px;height:1.5px;background:#222;"></div>
<svg class="r" style="left:86px;top:358px" width="25" height="32" viewBox="0 0 25 32"><rect x="2" y="5" width="8" height="7" fill="#e8d8a0"/><rect x="13" y="4" width="8" height="7" fill="#e8d8a0"/><circle cx="6" cy="18" r="4" fill="none" stroke="#999" stroke-width="1"/><circle cx="17" cy="18" r="4" fill="none" stroke="#999" stroke-width="1"/><rect x="2" y="14" width="8" height="4" fill="#d8c890"/></svg>
<div class="r" style="left:40px;top:417px;width:60px;height:1.5px;background:#e85060;"></div>
<svg class="r" style="left:42px;top:422px" width="30" height="20" viewBox="0 0 30 20"><rect x="0" y="0" width="30" height="20" fill="#f4f4f0"/><rect x="3" y="3" width="6" height="4" fill="#bbb"/><rect x="12" y="3" width="6" height="4" fill="#bbb"/><rect x="21" y="3" width="6" height="4" fill="#bbb"/><rect x="3" y="10" width="7" height="5" fill="#a8d8d0"/><rect x="12" y="10" width="7" height="5" fill="#e8d8a0"/><rect x="21" y="10" width="7" height="5" fill="#e8d890"/></svg>
<div class="r" style="left:72px;top:424.0px;width:36px;height:0.7px;background:#c0c0d0;"></div>
<div class="r" style="left:72px;top:426.3px;width:36px;height:0.7px;background:#c0c0d0;"></div>
<div class="r" style="left:72px;top:428.6px;width:36px;height:0.7px;background:#c0c0d0;"></div>
<div class="r" style="left:72px;top:430.9px;width:36px;height:0.7px;background:#c0c0d0;"></div>
<div class="r" style="left:72px;top:433.2px;width:36px;height:0.7px;background:#c0c0d0;"></div>
<div class="r" style="left:72px;top:435.5px;width:36px;height:0.7px;background:#c0c0d0;"></div>
<div class="r" style="left:40px;top:452px;width:60px;height:1.2px;background:#e87080;"></div>
<div class="r" style="left:68px;top:451.5px;width:7px;height:2px;background:#e03050;"></div>
<svg class="r" style="left:100px;top:440px" width="16" height="19" viewBox="0 0 16 19"><circle cx="13" cy="12" r="9" fill="#fbc9c0"/><circle cx="4" cy="19" r="5" fill="#fcdcc0"/></svg>
<div class="r" style="left:40px;top:482px;width:22px;height:1.1px;background:#e06070;"></div>
<div class="r" style="left:84px;top:484px;width:30px;height:0.6px;background:#d8d8d8;"></div>
<div class="r" style="left:50px;top:488.0px;width:33px;height:0.7px;background:#c8c8d8;"></div>
<div class="r" style="left:86px;top:487.5px;width:4px;height:1.8px;background:#e0e070;"></div>
<div class="r" style="left:50px;top:490.9px;width:33px;height:0.7px;background:#c8c8d8;"></div>
<div class="r" style="left:86px;top:490.4px;width:8px;height:1.8px;background:#70c0e0;"></div>
<div class="r" style="left:50px;top:493.8px;width:33px;height:0.7px;background:#c8c8d8;"></div>
<div class="r" style="left:86px;top:493.3px;width:10px;height:1.8px;background:#e0e060;"></div>
<div class="r" style="left:50px;top:496.7px;width:33px;height:0.7px;background:#c8c8d8;"></div>
<div class="r" style="left:86px;top:496.2px;width:6px;height:1.8px;background:#60b070;"></div>
<div class="r" style="left:50px;top:499.6px;width:33px;height:0.7px;background:#c8c8d8;"></div>
<div class="r" style="left:86px;top:499.1px;width:12px;height:1.8px;background:#a0d0f0;"></div>
<div class="r" style="left:50px;top:502.5px;width:33px;height:0.7px;background:#c8c8d8;"></div>
<div class="r" style="left:86px;top:502.0px;width:7px;height:1.8px;background:#e0c060;"></div>
<div class="r" style="left:50px;top:505.4px;width:33px;height:0.7px;background:#c8c8d8;"></div>
<div class="r" style="left:86px;top:504.9px;width:14px;height:1.8px;background:#a070d0;"></div>
<div class="r" style="left:50px;top:508.3px;width:33px;height:0.7px;background:#c8c8d8;"></div>
<div class="r" style="left:86px;top:507.8px;width:30px;height:1.8px;background:#9060c0;"></div>
<svg class="r" style="left:100px;top:509px" width="16" height="15" viewBox="0 0 16 15"><circle cx="14" cy="13" r="10" fill="#fbc9b8"/><path d="M10 10 L13 14" stroke="#333" stroke-width="1.2"/></svg>
<div class="r" style="left:40px;top:546px;width:28px;height:1.1px;background:#e06070;"></div>
<svg class="r" style="left:52px;top:551px" width="40" height="30" viewBox="0 0 40 30"><path d="M3 10 L14 6 L20 16 L9 22 Z" fill="#d0c8e0"/><path d="M5 12 L13 9 L17 16 L9 19 Z" fill="#a8d0c0"/><path d="M22 15 L33 12 L36 22 L25 25 Z" fill="#e0d8f0"/><path d="M24 17 L31 15 L33 21 L26 23 Z" fill="#a0b8e0"/><path d="M10 3 H30 M8 5 L20 12" stroke="#999" stroke-width=".6"/></svg>
<svg class="r" style="left:96px;top:566px" width="20" height="21" viewBox="0 0 20 21"><circle cx="17" cy="13" r="9" fill="#fbc0b0"/><circle cx="8" cy="21" r="6" fill="#fde0c8"/></svg>
<div class="r" style="left:38.5px;top:609.5px;width:27px;height:1.6px;background:#e05060;"></div>
<div class="r" style="left:41px;top:616.5px;width:20px;height:0.8px;background:#a0a8c0;"></div>
<div class="r" style="left:41px;top:618.9px;width:20px;height:0.8px;background:#a0a8c0;"></div>
<div class="r" style="left:41px;top:621.3px;width:20px;height:0.8px;background:#a0a8c0;"></div>
<div class="r" style="left:41px;top:623.7px;width:20px;height:0.8px;background:#a0a8c0;"></div>
<div class="r" style="left:41px;top:626.1px;width:8px;height:0.8px;background:#a0a8c0;"></div>
<svg class="r" style="left:98px;top:605.5px" width="18" height="16" viewBox="0 0 18 16"><circle cx="8" cy="2" r="8" fill="#fcd0c8"/><circle cx="18" cy="8" r="5" fill="#fde4cc"/></svg>
<svg class="r" style="left:56px;top:620px" width="58" height="28" viewBox="0 0 58 28"><rect x="7" y="5" width="16" height="1.2" fill="#7a9ab8"/><rect x="18" y="3" width="10" height="1.2" fill="#60a8a0"/><rect x="6" y="7" width="17" height="3" fill="#6c88c8"/><rect x="24" y="7.5" width="8" height="2.5" fill="#666"/><rect x="32.5" y="3" width="1" height="12" fill="#7c90d0"/><rect x="34" y="6" width="18" height="4" fill="#5a76a8"/><rect x="10" y="11" width="44" height="4.5" fill="#78b8bc"/><rect x="4" y="8" width="1.5" height="17" fill="#6a8a80"/><rect x="15" y="17" width="12" height="1" fill="#98a0d8"/><rect x="36" y="16" width="14" height="1" fill="#98a0d8"/><rect x="38" y="2" width="14" height="1" fill="#90c0b0"/><rect x="53" y="2" width="1.2" height="14" fill="#7080b8"/><rect x="6" y="12" width="3" height="1" fill="#b0c0e0"/></svg>
<svg class="r" style="left:34.5px;top:636px" width="14" height="16" viewBox="0 0 14 16"><circle cx="6" cy="10" r="6" fill="#fde0c8"/></svg>
<svg class="r" style="left:34px;top:669.7px" width="82" height="46" viewBox="0 0 82 46"><circle cx="4" cy="3" r="7" fill="#fde0c8"/><circle cx="57" cy="0" r="7" fill="#fbd0c8"/><circle cx="67" cy="1" r="5" fill="#fde0d0"/><circle cx="7" cy="34" r="4" fill="#fde8d8"/><rect x="6" y="9.5" width="15" height="21" fill="#f2f0ee"/><ellipse cx="13.5" cy="14.5" rx="3.6" ry="3.4" fill="#6a4636"/><ellipse cx="13.5" cy="16" rx="2.6" ry="3" fill="#d8b4a0"/><path d="M7 30.5 C7 22 20 22 20 30.5 Z" fill="#a8a8a4"/><path d="M12 22 L13.5 27 L15 22 Z" fill="#f4f0ec"/><rect x="28" y="17.5" width="12" height="1.1" fill="#8a90a8"/><rect x="28" y="21.5" width="11" height="1.1" fill="#8a90a8"/><rect x="65" y="16" width="14" height="1.6" fill="#d04a60"/><rect x="67" y="19.5" width="11" height="1.6" fill="#d04a60"/><rect x="70" y="25" width="6" height="1" fill="#80b890"/><rect x="62" y="28.5" width="17" height="0.9" fill="#d06070"/><rect x="62" y="31.5" width="17" height="0.9" fill="#f0a0b0"/><rect x="64" y="33.3" width="15" height="0.9" fill="#f0a0b0"/><rect x="62" y="35.1" width="17" height="0.9" fill="#f0a0b0"/><rect x="64" y="36.9" width="15" height="0.9" fill="#f0a0b0"/><rect x="62" y="38.7" width="17" height="0.9" fill="#f0a0b0"/><rect x="64" y="40.5" width="15" height="0.9" fill="#f0a0b0"/><ellipse cx="3" cy="41" rx="4" ry="3" fill="#333"/></svg>
</div>
<svg class="r" style="left:76px;top:641px" width="12" height="17" viewBox="0 0 12 17"><path d="M1 1 L1 13.5 L4 10.8 L6.3 15.6 L8.4 14.6 L6.2 9.9 L10.2 9.9 Z" fill="#111" stroke="#fff" stroke-width="1"/></svg>
<svg class="r" style="left:137px;top:220.5px" width="1052" height="476" viewBox="137 220.5 1052 476">
<defs>
<clipPath id="pk"><circle cx="960.7" cy="237" r="71.5"/></clipPath>
<filter id="bl" x="-50%" y="-50%" width="200%" height="200%"><feGaussianBlur stdDeviation="3"/></filter>
<filter id="bl2" x="-50%" y="-50%" width="200%" height="200%"><feGaussianBlur stdDeviation="0.8"/></filter>
<clipPath id="pch"><rect x="900" y="237.8" width="153.3" height="300"/></clipPath>
</defs>
<rect x="866" y="263" width="74" height="84" rx="30" fill="#fcefe3" filter="url(#bl)"/>
<circle cx="960.7" cy="237" r="71.5" fill="#ffa7a0"/>
<g clip-path="url(#pk)"><rect x="866" y="263" width="74" height="84" rx="34" fill="#fcd8b4" filter="url(#bl2)"/></g>
<g clip-path="url(#pch)"><circle cx="1074" cy="300" r="73.6" fill="#fdd8b1"/>
<g clip-path="url(#pk)"><circle cx="1074" cy="300" r="73.6" fill="#2d2d33"/></g></g>
<ellipse cx="352" cy="578" rx="22" ry="14" fill="#fdf3ea" filter="url(#bl)"/>
<path d="M207.7 697 V627 C225 626 245 620 265 608 C290 594 315 582 335 582 C352 582 365 596 376 611 L375.5 622 C350 632 322 650 320 697 Z" fill="#fed9b2"/>
<path d="M375.5 622 C350 632 322 650 320 697 L373 697 C366 682 363 668 366 650 C368 640 372 630 375.5 622 Z" fill="#c8d3da"/>
</svg>
<div class="t" style="left:324.6px;top:276.1px;font-size:28.90px;font-weight:400;color:#c00a22;transform:scaleX(0.953);-webkit-text-stroke:0.45px #c00a22;">Что можно сделать?</div>
<div class="t" style="left:349.8px;top:348.3px;font-size:14.60px;font-weight:700;color:#1f2b55;transform:scaleX(0.880);">Повышение квалификации</div>
<div class="r" style="left:325.6px;top:353.5px;width:4px;height:4px;border-radius:50%;background:#222"></div>
<div class="t" style="left:349.8px;top:370.0px;font-size:14.60px;font-weight:700;color:#1f2b55;transform:scaleX(0.866);">Экспертиза отчетов</div>
<div class="r" style="left:325.6px;top:375.2px;width:4px;height:4px;border-radius:50%;background:#222"></div>
<div class="t" style="left:349.8px;top:391.9px;font-size:14.60px;font-weight:700;color:#1f2b55;transform:scaleX(0.875);">Общение профессионалов</div>
<div class="r" style="left:325.6px;top:397.1px;width:4px;height:4px;border-radius:50%;background:#222"></div>
<div class="t" style="left:349.8px;top:413.5px;font-size:14.60px;font-weight:700;color:#1f2b55;transform:scaleX(0.893);">Методическая работа</div>
<div class="r" style="left:325.6px;top:418.7px;width:4px;height:4px;border-radius:50%;background:#222"></div>
<div class="t" style="left:349.8px;top:435.7px;font-size:14.60px;font-weight:700;color:#1f2b55;transform:scaleX(0.878);">Обучение</div>
<div class="r" style="left:325.6px;top:440.90000000000003px;width:4px;height:4px;border-radius:50%;background:#222"></div>
<div class="t" style="left:553.4px;top:447.7px;font-size:21.82px;font-weight:700;color:#2b4a9c;transform:scaleX(1.079);-webkit-text-stroke:0.80px #2b4a9c;">команда</div>
<div class="t" style="left:579.2px;top:467.9px;font-size:12.73px;font-weight:700;color:#8585f0;transform:scaleX(0.954);-webkit-text-stroke:0.46px #8585f0;">правда</div>
<div class="t" style="left:640.2px;top:470.7px;font-size:10.00px;font-weight:700;color:#2a3580;transform:scaleX(0.935);-webkit-text-stroke:0.36px #2a3580;">идеи</div>
<div class="t" style="left:533.7px;top:486.5px;font-size:9.64px;font-weight:700;color:#7fd6aa;transform:scaleX(0.977);-webkit-text-stroke:0.35px #7fd6aa;">принцип</div>
<div class="t" style="left:585.0px;top:474.3px;font-size:39.65px;font-weight:700;color:#2b50c8;transform:scaleX(1.024);-webkit-text-stroke:1.45px #2b50c8;">этика</div>
<div class="t" style="left:556.5px;top:508.5px;font-size:10.00px;font-weight:700;color:#3a8a90;transform:scaleX(0.933);-webkit-text-stroke:0.36px #3a8a90;">помощь</div>
<div class="t" style="left:602.3px;top:512.1px;font-size:15.46px;font-weight:700;color:#2d2ec8;transform:scaleX(0.984);-webkit-text-stroke:0.56px #2d2ec8;">верность</div>
<div class="t" style="left:664.4px;top:439.7px;font-size:19.64px;font-weight:700;color:#3a8f6f;transform:scaleX(1.124);-webkit-text-stroke:0.72px #3a8f6f;">уважение</div>
<div class="t" style="left:661.5px;top:461.8px;font-size:9.09px;font-weight:700;color:#333333;transform:scaleX(1.008);-webkit-text-stroke:0.33px #333333;">стоимость</div>
<div class="t" style="left:727.2px;top:460.9px;font-size:12.18px;font-weight:700;color:#6060dd;transform:scaleX(1.020);-webkit-text-stroke:0.44px #6060dd;">группа</div>
<div class="t" style="left:674.7px;top:473.2px;font-size:10.00px;font-weight:700;color:#5a4ab0;transform:scaleX(0.936);-webkit-text-stroke:0.36px #5a4ab0;">стратегия</div>
<div class="t" style="left:744.7px;top:474.5px;font-size:10.91px;font-weight:700;color:#334d33;transform:scaleX(0.871);-webkit-text-stroke:0.40px #334d33;">рука</div>
<div class="t" style="left:704.9px;top:482.7px;font-size:8.91px;font-weight:700;color:#5a9ab0;transform:scaleX(1.048);-webkit-text-stroke:0.32px #5a9ab0;">работа</div>
<div class="t" style="left:709.2px;top:489.5px;font-size:16.55px;font-weight:700;color:#111111;transform:scaleX(1.245);-webkit-text-stroke:0.60px #111111;">успех</div>
<div class="t" style="left:681.7px;top:509.0px;font-size:9.09px;font-weight:700;color:#4050a0;transform:scaleX(1.021);-webkit-text-stroke:0.33px #4050a0;">компас</div>
<div class="t" style="left:731.2px;top:509.0px;font-size:9.09px;font-weight:700;color:#2a2acc;transform:scaleX(1.055);-webkit-text-stroke:0.33px #2a2acc;">человек</div>
<div class="t" style="left:686.8px;top:518.5px;font-size:16.55px;font-weight:700;color:#1d4a3a;transform:scaleX(1.093);-webkit-text-stroke:0.60px #1d4a3a;">развитие</div>
<div class="t" style="left:792.6px;top:446.6px;font-size:10.37px;font-weight:700;color:#3a48a8;transform:scaleX(0.947);-webkit-text-stroke:0.38px #3a48a8;">дружба</div>
<div class="t" style="left:793.1px;top:450.2px;font-size:40.56px;font-weight:700;color:#2a4a88;transform:scaleX(0.910);-webkit-text-stroke:1.48px #2a4a88;">доверие</div>
<div class="t" style="left:796.8px;top:486.8px;font-size:11.64px;font-weight:700;color:#5a2aa0;transform:scaleX(0.787);-webkit-text-stroke:0.42px #5a2aa0;">польза</div>
<div class="t" style="left:840.7px;top:485.6px;font-size:10.55px;font-weight:700;color:#3a9a9a;transform:scaleX(0.897);-webkit-text-stroke:0.38px #3a9a9a;">стратегия</div>
<div class="t" style="left:929.2px;top:484.7px;font-size:13.64px;font-weight:700;color:#3a8a7a;transform:scaleX(0.882);-webkit-text-stroke:0.50px #3a8a7a;">честь</div>
<div class="t" style="left:921.2px;top:433.6px;font-size:9.82px;font-weight:700;color:#222222;transform:scaleX(0.974);-webkit-text-stroke:0.36px #222222;">надёжность</div>
<div class="t" style="left:876.2px;top:444.5px;font-size:12.00px;font-weight:700;color:#3a9a8a;transform:scaleX(1.036);-webkit-text-stroke:0.44px #3a9a8a;">честность</div>
<div class="t" style="left:944.2px;top:450.5px;font-size:10.91px;font-weight:700;color:#3a3ad0;transform:scaleX(0.864);-webkit-text-stroke:0.40px #3a3ad0;">знания</div>
<div class="t" style="left:874.7px;top:498.5px;font-size:10.91px;font-weight:700;color:#5a3ab0;transform:scaleX(0.859);-webkit-text-stroke:0.40px #5a3ab0;">управление</div>
<div class="t" style="left:949.2px;top:502.2px;font-size:10.55px;font-weight:700;color:#5ab0a0;transform:scaleX(0.899);-webkit-text-stroke:0.38px #5ab0a0;">гордость</div>
<div class="t" style="left:792.2px;top:502.1px;font-size:13.64px;font-weight:700;color:#6a8a80;transform:scaleX(0.957);-webkit-text-stroke:0.50px #6a8a80;">поддержка</div>
<div class="t" style="left:861.2px;top:512.5px;font-size:10.91px;font-weight:700;color:#8a8aff;transform:scaleX(0.909);-webkit-text-stroke:0.40px #8a8aff;">добро</div>
<div class="t" style="left:903.7px;top:513.7px;font-size:10.00px;font-weight:700;color:#333333;transform:scaleX(0.971);-webkit-text-stroke:0.36px #333333;">достижения</div>
<div class="t" style="left:791.8px;top:524.6px;font-size:10.55px;font-weight:700;color:#5a9a9a;transform:scaleX(0.887);-webkit-text-stroke:0.38px #5a9a9a;">равенство</div>
<div class="t" style="left:852.2px;top:524.6px;font-size:10.55px;font-weight:700;color:#3a80a0;transform:scaleX(0.886);-webkit-text-stroke:0.38px #3a80a0;">объект</div>
<div class="t" style="left:919.5px;top:522.0px;font-size:13.64px;font-weight:700;color:#3a3ac8;transform:scaleX(0.927);-webkit-text-stroke:0.50px #3a3ac8;">интеграция</div>
<div class="t" style="left:562.4px;top:527.8px;font-size:43.65px;font-weight:700;color:#3d9a9e;transform:scaleX(1.162);-webkit-text-stroke:1.59px #3d9a9e;">#оценщиквместе</div>
<div class="t" style="left:617.1px;top:570.0px;font-size:14.55px;font-weight:700;color:#2a5a3a;transform:scaleX(0.837);-webkit-text-stroke:0.53px #2a5a3a;">союз</div>
<div class="t" style="left:710.6px;top:568.8px;font-size:13.09px;font-weight:700;color:#5a40c8;transform:scaleX(0.824);-webkit-text-stroke:0.48px #5a40c8;">объединение</div>
<div class="t" style="left:801.0px;top:565.8px;font-size:10.73px;font-weight:700;color:#333333;transform:scaleX(0.887);-webkit-text-stroke:0.39px #333333;">соглашение</div>
<div class="t" style="left:916.0px;top:565.0px;font-size:13.64px;font-weight:700;color:#3a50c8;transform:scaleX(0.918);-webkit-text-stroke:0.50px #3a50c8;">направление</div>
<div class="t" style="left:851.0px;top:578.3px;font-size:10.73px;font-weight:700;color:#5a9a8a;transform:scaleX(0.881);-webkit-text-stroke:0.39px #5a9a8a;">искренность</div>
<div class="t" style="left:0;top:0;font-size:23.67px;font-weight:700;color:#1d4a3a;transform-origin:0 0;transform:translate(532.0px,623.9px) rotate(-90deg) scaleX(1.122);-webkit-text-stroke:0.8px #1d4a3a;">обучение</div>
<div class="t" style="left:0;top:0;font-size:17.05px;font-weight:700;color:#3050c0;transform-origin:0 0;transform:translate(772.9px,531.0px) rotate(-90deg) scaleX(0.925);-webkit-text-stroke:0.5px #3050c0;">сотрудничество</div>
<div class="t" style="left:0;top:0;font-size:9.47px;font-weight:700;color:#5ab09a;transform-origin:0 0;transform:translate(980.5px,496.3px) rotate(-90deg) scaleX(1.013);">комптентность</div>
<div class="t" style="left:0;top:0;font-size:18.94px;font-weight:700;color:#2a4a9a;transform-origin:0 0;transform:translate(992.0px,546.9px) rotate(-90deg) scaleX(0.970);-webkit-text-stroke:0.6px #2a4a9a;">партнёрство</div>
</div></div>
<div class="r" style="left:1192px;top:413px;width:1.2px;height:18px;background:#cfcfcf;"></div>
<div class="r" style="left:1195px;top:413px;width:1.2px;height:18px;background:#cfcfcf;"></div>
<svg class="r" style="left:1198px;top:338px" width="298" height="168" viewBox="0 0 298 168">
<defs><filter id="vb" x="-5%" y="-5%" width="110%" height="110%"><feGaussianBlur stdDeviation="1.0"/></filter><filter id="vp" x="-5%" y="-5%" width="110%" height="110%"><feGaussianBlur stdDeviation="0.8"/></filter><filter id="hr" x="-10%" y="-10%" width="120%" height="120%"><feTurbulence type="fractalNoise" baseFrequency="0.12" numOctaves="2" seed="3"/><feDisplacementMap in="SourceGraphic" scale="6"/><feGaussianBlur stdDeviation="0.7"/></filter>
<linearGradient id="ceil" x1="0" y1="0" x2="1" y2="1"><stop offset="0" stop-color="#d2bc98"/><stop offset=".2" stop-color="#e6dac4"/><stop offset=".6" stop-color="#eee6d6"/><stop offset="1" stop-color="#f2ebdc"/></linearGradient>
<linearGradient id="floor" x1="0" y1="1" x2="1" y2="0"><stop offset="0" stop-color="#5a3e22"/><stop offset=".5" stop-color="#8a6a48"/><stop offset="1" stop-color="#c8b490"/></linearGradient>
<linearGradient id="shirt" x1="0" y1="0" x2="1" y2="0"><stop offset="0" stop-color="#e4e8e4"/><stop offset=".45" stop-color="#f7f8f6"/><stop offset="1" stop-color="#e8ebe8"/></linearGradient>
<linearGradient id="hair" x1="0" y1="0" x2="1" y2="1"><stop offset="0" stop-color="#727270"/><stop offset=".4" stop-color="#828280"/><stop offset=".7" stop-color="#636361"/><stop offset="1" stop-color="#8e8e8c"/></linearGradient>
<linearGradient id="face" x1="0" y1="0" x2="1" y2="1"><stop offset="0" stop-color="#dcbcac"/><stop offset=".5" stop-color="#cda896"/><stop offset="1" stop-color="#ae8676"/></linearGradient>
<linearGradient id="glass" x1="0" y1="0" x2="0" y2="1"><stop offset="0" stop-color="#7a6e64"/><stop offset=".45" stop-color="#c0b8b0"/><stop offset="1" stop-color="#6e6258"/></linearGradient>
</defs>
<g filter="url(#vb)">
<rect width="298" height="168" fill="#c9ae86"/>
<path d="M10 0 H228 V100 L138 84 L62 38 Z" fill="url(#ceil)"/>

<path d="M0 168 V148 L66 127 L138 90 L150 92 L125 168 Z" fill="url(#floor)"/>
<path d="M100 150 L112 138 L122 138 L110 150 Z M110 132 L120 122 L130 122 L120 132 Z M118 117 L126 110 L134 110 L127 117 Z M126 105 L132 100 L138 100 L133 105 Z" fill="#ecdcbc" opacity=".8"/><path d="M20 6 C60 22 110 55 138 79" stroke="#f6f0e4" stroke-width="2.5" fill="none" opacity=".8"/><path d="M70 0 C100 25 125 55 139 79 M120 0 C128 30 136 55 140 79" stroke="#d8ccb4" stroke-width="1.2" fill="none" opacity=".5"/>
<path d="M0 0 H13 V116 H0 Z" fill="#8a5a30"/>
<path d="M1.5 5 H11.5 V110 H1.5 Z" fill="url(#glass)"/>
<path d="M1.5 28 H11.5 M1.5 52 H11.5 M1.5 76 H11.5 M1.5 96 H11.5 M6.5 5 V110" stroke="#8a5a30" stroke-width="1.2"/>
<path d="M13 12 H18 V112 H13 Z" fill="#e6ddd0"/>
<path d="M0 116 H18 L18 148 L0 152 Z" fill="#a87646"/>
<path d="M18 18 L66 38 V108 L18 112 Z" fill="#935f30"/>
<path d="M32 30 L64 42 V104 L32 106 Z" fill="url(#glass)"/>
<path d="M40 33 V105 M48 36 V105 M56 39 V104 M32 58 L64 64 M32 84 L64 86" stroke="#935f30" stroke-width="1.1"/>
<path d="M18 112 L66 106 V127 L18 148 Z" fill="#ad7c4a"/>
<path d="M30 113 V143 M42 111 V138 M54 109 V133" stroke="#7e5430" stroke-width="1"/>
<path d="M64 42 L82 50 V100 L64 104 Z" fill="#8e5c30"/><path d="M67 48 L80 54 V97 L67 100 Z" fill="url(#glass)"/>
<path d="M64 104 L82 100 V114 L64 124 Z" fill="#a67446"/>
<path d="M82 51 L94 57 V97 L82 100 Z" fill="#8a5a30"/><path d="M84 56 L92 60 V95 L84 97 Z" fill="#857e78"/>
<path d="M82 100 L94 97 V108 L82 114 Z" fill="#a27244"/>
<path d="M94 57 L104 62 V95 L94 97 Z" fill="#8a5c34"/><path d="M96 61 L102 64 V93 L96 95 Z" fill="#8a847e"/>
<path d="M94 97 L104 95 V103 L94 108 Z" fill="#9c6e42"/>
<path d="M104 62 L114 68 V94 L104 96 Z" fill="#8c6038"/><path d="M104 96 L114 94 V100 L104 104 Z" fill="#9a6c40"/>
<path d="M114 68 L124 73 V93 L114 94 Z" fill="#8e6440"/><path d="M124 73 L137 79 V91 L124 93 Z" fill="#94704c"/>
<rect x="135" y="80" width="5" height="11" fill="#f0e8d4"/>
<path d="M68 110 L70 90 L73 110 L72 122 L69 122 Z" fill="#4a3a34"/>
<rect x="218" y="0" width="10" height="110" fill="#c8b89c"/>
<rect x="227" y="0" width="41" height="128" fill="#eeeeea"/>
<path d="M228 0 V128 M236.5 0 V128 M249.4 0 V128 M261.4 0 V128 M227 45.8 H268 M227 82.6 H268" stroke="#cdbd9c" stroke-width="2"/>
<rect x="267" y="0" width="31" height="168" fill="#d2b68c"/>
<path d="M251 17 H298 V25 H291 C291 35 290 48 286 58 C280 52 276 42 272 33 C268 28 262 26 256 25 H251 Z" fill="#e4dac4"/>
<path d="M264 0 H282 C281 5 279 9 276 12 L278 17 H266 L268 12 C265 9 264 5 264 0 Z" fill="#d8ccb4"/>
<rect x="279" y="66" width="15" height="42" fill="#94784e"/><rect x="280.5" y="67.5" width="12" height="39" fill="#d8ccb0"/>
<path d="M283 74 H290 M283 79 H290 M283 84 H290 M283 89 H290 M283 94 H290 M283 99 H290" stroke="#a09080" stroke-width=".8"/>
<path d="M264 128 H298 V168 H268 Z" fill="#cdb28a"/>
</g>
<g filter="url(#vp)">
<path d="M149 106 C150 122 157 139 170 144 C184 146 196 132 203 106 Z" fill="#c8a08e"/>
<path d="M82.5 168 C86 155 93 143 102 130 C108 122 116 114 127 111 C136 109 145 108 150 107 C153 122 162 140 174 142 C190 142 198 124 201 107.5 C206 107 212 107 216 108 C240 118 258 132 268 148 C274 156 278 162 280 168 Z" fill="url(#shirt)"/>
<path d="M150 107 C153 122 162 140 174 142 C190 142 198 124 201 107.5 L204 109 C201 130 190 146 174 146 C158 146 150 128 147 110 Z" fill="#ffffff"/>
<path d="M140 44 C138 62 141 84 146 98 C152 114 162 123 172 123 C188 122 199 108 203 90 C206 74 205 56 200 42 C186 33 156 32 140 44 Z" fill="url(#face)"/>
</g><g filter="url(#hr)"><path d="M135 32 C134 20 142 12 152 9 C162 6 176 5 188 7 C204 9 216 16 222 28 C227 40 227 56 226 70 C226 84 224 96 219 104 C215 109 209 110 205 108 C203 102 203 96 203 90 C204 74 204 58 199 44 C184 34 158 34 141 44 C140 54 139 62 140 70 C137 64 135 50 135 32 Z" fill="url(#hair)"/>
<path d="M148 14 C165 8 195 9 212 20 C200 17 190 18 182 22 C170 20 158 19 148 24 Z" fill="#a4a4a2" opacity=".4"/>
<path d="M205 30 C214 40 220 56 219 75" stroke="#a0a09e" stroke-width="4" fill="none" opacity=".35"/>
</g><g filter="url(#vp)"><path d="M141 44 C150 38 170 36 186 38" stroke="#5a5a58" stroke-width="2" fill="none" opacity=".6"/>
<path d="M200 44 C210 60 214 82 210 100" stroke="#b4b4b2" stroke-width="3" fill="none" opacity=".5"/>
</g>
<g filter="url(#vb)">
<ellipse cx="152" cy="64" rx="8" ry="4.5" fill="#a07262" opacity=".7"/><ellipse cx="178" cy="65" rx="8" ry="4.5" fill="#a07262" opacity=".7"/>
<path d="M145 55 Q152 52 160 55 M170 56 Q178 53 187 57" stroke="#8a6252" stroke-width="1.8" fill="none" opacity=".8"/>
<ellipse cx="152.5" cy="65.5" rx="4.5" ry="2" fill="#3e2620"/><ellipse cx="178.5" cy="66.5" rx="4.5" ry="2" fill="#3e2620"/>
<path d="M161 70 L158.5 81 Q163 84 168 81" stroke="#9a7060" stroke-width="1.2" fill="none" opacity=".8"/>
<path d="M151 96 Q161 91 172 95 Q162 101 151 96 Z" fill="#6a3a34"/>

</g>
<rect x="0" y="151.5" width="104.5" height="16.5" fill="rgba(34,34,34,.72)"/>
<rect x="3" y="161" width="2" height="4" fill="#fff"/><rect x="6" y="158" width="2" height="7" fill="#fff"/><rect x="9" y="155.5" width="2" height="9.5" fill="#fff"/><rect x="12" y="153.5" width="2" height="11.5" fill="#fff"/>
</svg>
<div class="t" style="left:1216.0px;top:493.1px;font-size:10.50px;font-weight:400;color:#f2f2f2;transform:scaleX(0.952);">Наталья Киршина</div>
<div class="t" style="left:8.0px;top:828.5px;font-size:10.00px;font-weight:400;color:#dedede;transform:scaleX(0.966);-webkit-text-stroke:0.2px #dedede;">Включить звук</div>
<div class="t" style="left:87.5px;top:828.5px;font-size:10.00px;font-weight:400;color:#dedede;transform:scaleX(0.933);-webkit-text-stroke:0.2px #dedede;">Начать видео</div>
<div class="t" style="left:378.8px;top:828.5px;font-size:10.00px;font-weight:400;color:#dedede;transform:scaleX(0.947);-webkit-text-stroke:0.2px #dedede;">Участники</div>
<div class="t" style="left:479.5px;top:828.5px;font-size:10.00px;font-weight:400;color:#dedede;transform:scaleX(0.904);-webkit-text-stroke:0.2px #dedede;">Чат</div>
<div class="t" style="left:528.8px;top:828.5px;font-size:10.00px;font-weight:400;color:#36d760;transform:scaleX(0.941);-webkit-text-stroke:0.2px #36d760;">Демонстрация экрана</div>
<div class="t" style="left:646.8px;top:828.5px;font-size:10.00px;font-weight:400;color:#dedede;transform:scaleX(0.923);-webkit-text-stroke:0.2px #dedede;">Сводка</div>
<div class="t" style="left:700.0px;top:828.5px;font-size:10.00px;font-weight:400;color:#dedede;transform:scaleX(0.947);-webkit-text-stroke:0.2px #dedede;">AI Companion</div>
<div class="t" style="left:782.0px;top:828.5px;font-size:10.00px;font-weight:400;color:#dedede;transform:scaleX(0.930);-webkit-text-stroke:0.2px #dedede;">Запись</div>
<div class="t" style="left:835.8px;top:828.5px;font-size:10.00px;font-weight:400;color:#dedede;transform:scaleX(0.927);-webkit-text-stroke:0.2px #dedede;">Показать субтитры</div>
<div class="t" style="left:937.5px;top:828.5px;font-size:10.00px;font-weight:400;color:#dedede;transform:scaleX(0.918);-webkit-text-stroke:0.2px #dedede;">Реакции</div>
<div class="t" style="left:993.0px;top:828.5px;font-size:10.00px;font-weight:400;color:#dedede;transform:scaleX(0.974);-webkit-text-stroke:0.2px #dedede;">Приложения</div>
<div class="t" style="left:1062.5px;top:828.5px;font-size:10.00px;font-weight:400;color:#dedede;transform:scaleX(0.970);-webkit-text-stroke:0.2px #dedede;">Доски сообщений</div>
<div class="t" style="left:1158.8px;top:828.5px;font-size:10.00px;font-weight:400;color:#dedede;transform:scaleX(0.956);-webkit-text-stroke:0.2px #dedede;">Примечания</div>
<svg class="r" style="left:0;top:795px" width="1500" height="32" viewBox="0 795 1500 32">
<rect x="36.5" y="807" width="7" height="11" rx="3.5" fill="#bdbdbd"/><path d="M33.5 814 C33.5 822 46.5 822 46.5 814 M40 820 V823.5 M36.5 823.5 H43.5" stroke="#bdbdbd" stroke-width="1.3" fill="none"/>
<path d="M31 823 L48.5 807" stroke="#e0453a" stroke-width="1.4"/>
<path d="M66.5 817 L69.5 814 L72.5 817" stroke="#ccc" stroke-width="1.3" fill="none"/>
<rect x="108" y="809.5" width="13.5" height="11.5" rx="1.5" fill="#bdbdbd"/><path d="M122 813.5 L127 810.5 V820 L122 817 Z" fill="#bdbdbd"/>
<path d="M108 824 L126 807" stroke="#e0453a" stroke-width="1.4"/>
<circle cx="397" cy="811" r="3.6" fill="#bdbdbd"/><path d="M391 822.5 C391 815.5 403 815.5 403 822.5 Z" fill="#bdbdbd"/>
<circle cx="404.5" cy="812" r="3" fill="#bdbdbd"/><path d="M400 822.5 H410.5 C410.5 817 406 815.5 402.5 816" fill="#bdbdbd"/>
<path d="M440 817 L443 814 L446 817" stroke="#ccc" stroke-width="1.3" fill="none"/>
<path d="M480 809 H494.5 V819 H485 L481.5 822.5 V819 H480 Z" fill="#bdbdbd"/>
<rect x="490.5" y="803.8" width="12.5" height="11.5" rx="5" fill="#e53935"/>
<path d="M510 817 L513 814 L516 817" stroke="#ccc" stroke-width="1.3" fill="none"/>
<rect x="566.5" y="809" width="19" height="13" rx="2" fill="#22c55e"/><path d="M576 819 V812 M573 815 L576 812 L579 815" stroke="#111" stroke-width="1.5" fill="none"/>
<path d="M655 807 H665 L670 812 V822 C670 823 669 824 668 824 H657 C656 824 655 823 655 822 Z" fill="#bdbdbd"/><path d="M662 812 L663.5 816 L667 817 L663.5 818 L662 821.5 L660.5 818 L657 817 L660.5 816 Z" fill="#222"/>
<path d="M729 808 L731.5 814.5 L738 817 L731.5 819.5 L729 826 L726.5 819.5 L720 817 L726.5 814.5 Z" fill="#bdbdbd"/><path d="M736.5 806.5 L737.3 808.7 L739.5 809.5 L737.3 810.3 L736.5 812.5 L735.7 810.3 L733.5 809.5 L735.7 808.7 Z" fill="#bdbdbd"/>
<circle cx="797.5" cy="815.5" r="7.2" fill="none" stroke="#bdbdbd" stroke-width="1.3"/><circle cx="797.5" cy="815.5" r="5.5" fill="#bdbdbd"/>
<rect x="867" y="809" width="19" height="14" rx="2" fill="#bdbdbd"/><text x="870.5" y="819.5" font-size="8" font-weight="700" fill="#1a1a1a" font-family="Liberation Sans">CC</text>
<path d="M911.5 817 L914.5 814 L917.5 817" stroke="#ccc" stroke-width="1.3" fill="none"/>
<circle cx="955" cy="816.5" r="6.5" fill="#bdbdbd"/><circle cx="952.8" cy="815" r=".9" fill="#222"/><circle cx="957.2" cy="815" r=".9" fill="#222"/><path d="M952 818 Q955 821 958 818" stroke="#222" stroke-width="1" fill="none"/>
<path d="M961.5 806.5 V812.5 M958.5 809.5 H964.5" stroke="#bdbdbd" stroke-width="1.3"/>
<path d="M1015 812 V810 C1015 809 1016 808 1017 808 H1019 M1015 818 V821 C1015 822 1016 823 1017 823 H1019 M1027 818 V821 C1027 822 1026 823 1025 823 H1023" stroke="#bdbdbd" stroke-width="1.4" fill="none"/><circle cx="1025" cy="810.5" r="2.2" fill="none" stroke="#bdbdbd" stroke-width="1.3"/><circle cx="1018" cy="820.5" r="1.2" fill="none" stroke="#bdbdbd" stroke-width="1"/>
<rect x="1095.5" y="808.5" width="15" height="10.5" rx="1.5" fill="none" stroke="#bdbdbd" stroke-width="1.4"/><rect x="1103" y="817" width="8" height="3.5" rx="1.5" fill="#bdbdbd"/>
<rect x="1181.5" y="808" width="11" height="14" rx="1.5" fill="none" stroke="#bdbdbd" stroke-width="1.4"/><path d="M1184.5 812 H1189.5 M1184.5 814.5 H1189.5 M1184.5 817 H1187.5" stroke="#bdbdbd" stroke-width="1"/><rect x="1185" y="821" width="9" height="3" rx="1.3" fill="#bdbdbd"/>
</svg>
<div class="t" style="left:412.5px;top:809.5px;font-size:10.00px;font-weight:400;color:#d0d0d0;transform:scaleX(1.081);">48</div>
<div class="t" style="left:494.8px;top:806.1px;font-size:8.50px;font-weight:700;color:#ffffff;transform:scaleX(0.848);">4</div>
<div class="r" style="left:1442px;top:813px;width:48.5px;height:21px;background:#c42b2b;border-radius:5px;"></div>
<div class="t" style="left:1451.0px;top:818.5px;font-size:10.00px;font-weight:700;color:#ffffff;transform:scaleX(0.910);">Выйти</div>
</body></html>
